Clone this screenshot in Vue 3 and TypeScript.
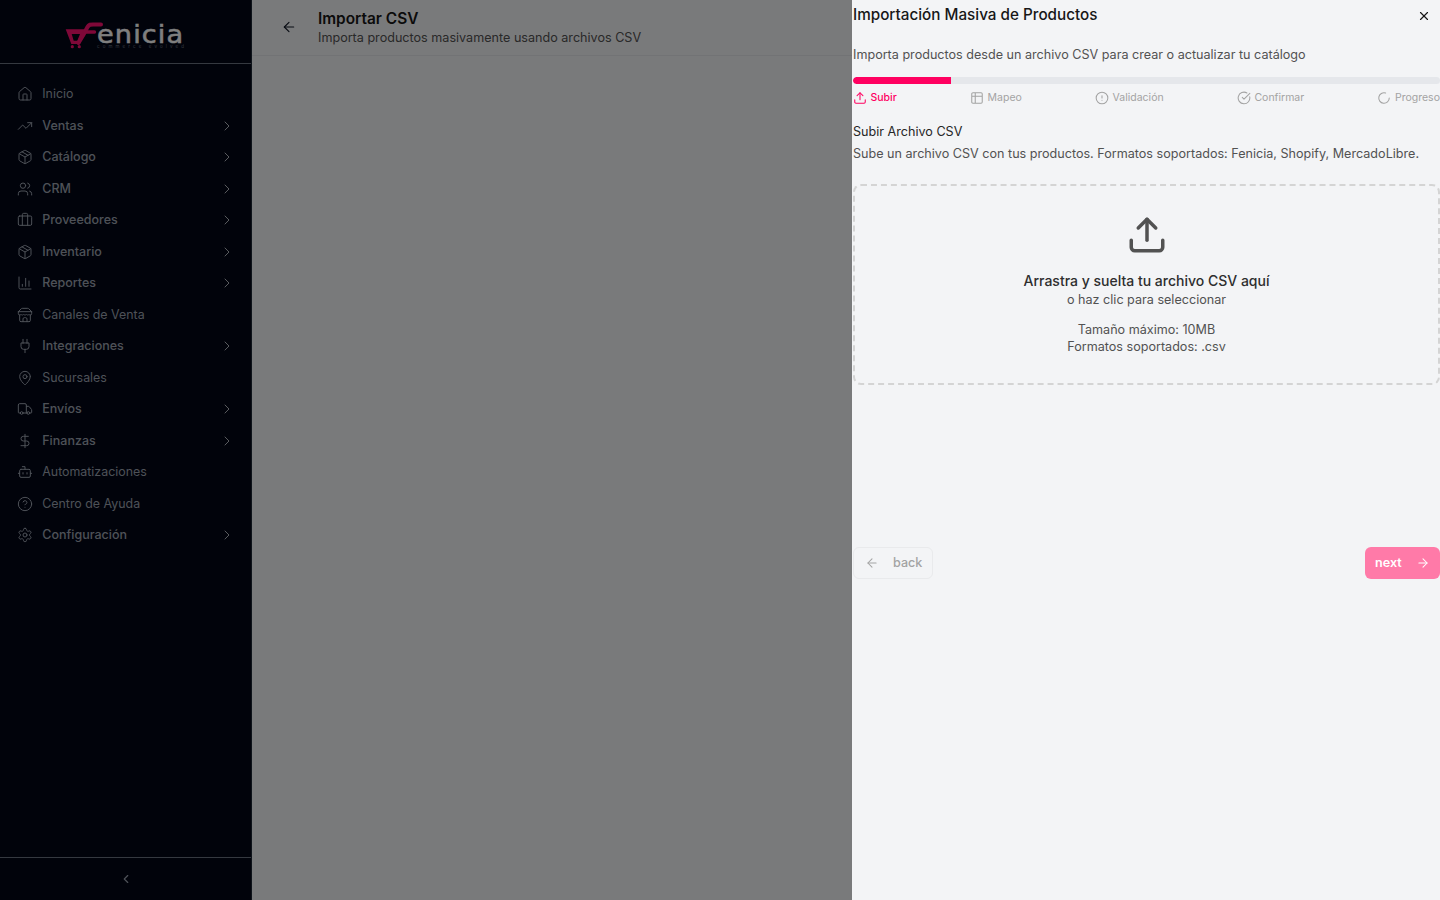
<script setup lang="ts">
interface NavItem { label: string; icon: string; more?: boolean }

const icons: Record<string, string> = {
  home: '<path d="M15 21v-8a1 1 0 0 0-1-1h-4a1 1 0 0 0-1 1v8"/><path d="M3 10a2 2 0 0 1 .709-1.528l7-5.999a2 2 0 0 1 2.582 0l7 5.999A2 2 0 0 1 21 10v9a2 2 0 0 1-2 2H5a2 2 0 0 1-2-2z"/>',
  trend: '<polyline points="22 7 13.5 15.5 8.5 10.5 2 17"/><polyline points="16 7 22 7 22 13"/>',
  box: '<path d="M11 21.73a2 2 0 0 0 2 0l7-4A2 2 0 0 0 21 16V8a2 2 0 0 0-1-1.73l-7-4a2 2 0 0 0-2 0l-7 4A2 2 0 0 0 3 8v8a2 2 0 0 0 1 1.73z"/><path d="M12 22V12"/><polyline points="3.29 7 12 12 20.71 7"/><path d="m7.5 4.27 9 5.15"/>',
  users: '<path d="M16 21v-2a4 4 0 0 0-4-4H6a4 4 0 0 0-4 4v2"/><circle cx="9" cy="7" r="4"/><path d="M22 21v-2a4 4 0 0 0-3-3.87"/><path d="M16 3.13a4 4 0 0 1 0 7.75"/>',
  brief: '<path d="M16 20V4a2 2 0 0 0-2-2h-4a2 2 0 0 0-2 2v16"/><rect width="20" height="14" x="2" y="6" rx="2"/>',
  chart: '<path d="M3 3v16a2 2 0 0 0 2 2h16"/><path d="M18 17V9"/><path d="M13 17V5"/><path d="M8 17v-3"/>',
  store: '<path d="m2 7 4.41-4.41A2 2 0 0 1 7.83 2h8.34a2 2 0 0 1 1.42.59L22 7"/><path d="M4 12v8a2 2 0 0 0 2 2h12a2 2 0 0 0 2-2v-8"/><path d="M15 22v-4a2 2 0 0 0-2-2h-2a2 2 0 0 0-2 2v4"/><path d="M2 7h20"/><path d="M22 7v3a2 2 0 0 1-2 2a2.7 2.7 0 0 1-1.59-.63.7.7 0 0 0-.82 0A2.7 2.7 0 0 1 16 12a2.7 2.7 0 0 1-1.59-.63.7.7 0 0 0-.82 0A2.7 2.7 0 0 1 12 12a2.7 2.7 0 0 1-1.59-.63.7.7 0 0 0-.82 0A2.7 2.7 0 0 1 8 12a2.7 2.7 0 0 1-1.59-.63.7.7 0 0 0-.82 0A2.7 2.7 0 0 1 4 12a2 2 0 0 1-2-2V7"/>',
  plug: '<path d="M12 22v-5"/><path d="M9 8V2"/><path d="M15 8V2"/><path d="M18 8v5a4 4 0 0 1-4 4h-4a4 4 0 0 1-4-4V8Z"/>',
  pin: '<path d="M20 10c0 4.993-5.539 10.193-7.399 11.799a1 1 0 0 1-1.202 0C9.539 20.193 4 14.993 4 10a8 8 0 0 1 16 0"/><circle cx="12" cy="10" r="3"/>',
  truck: '<path d="M14 18V6a2 2 0 0 0-2-2H4a2 2 0 0 0-2 2v11a1 1 0 0 0 1 1h2"/><path d="M15 18H9"/><path d="M19 18h2a1 1 0 0 0 1-1v-3.65a1 1 0 0 0-.22-.624l-3.48-4.35A1 1 0 0 0 17.52 8H14"/><circle cx="17" cy="18" r="2"/><circle cx="7" cy="18" r="2"/>',
  dollar: '<line x1="12" x2="12" y1="2" y2="22"/><path d="M17 5H9.5a3.5 3.5 0 0 0 0 7h5a3.5 3.5 0 0 1 0 7H6"/>',
  bot: '<path d="M12 8V4H8"/><rect width="16" height="12" x="4" y="8" rx="2"/><path d="M2 14h2"/><path d="M20 14h2"/><path d="M15 13v2"/><path d="M9 13v2"/>',
  help: '<circle cx="12" cy="12" r="10"/><path d="M9.09 9a3 3 0 0 1 5.83 1c0 2-3 3-3 3"/><path d="M12 17h.01"/>',
  gear: '<path d="M12.22 2h-.44a2 2 0 0 0-2 2v.18a2 2 0 0 1-1 1.73l-.43.25a2 2 0 0 1-2 0l-.15-.08a2 2 0 0 0-2.73.73l-.22.38a2 2 0 0 0 .73 2.73l.15.1a2 2 0 0 1 1 1.72v.51a2 2 0 0 1-1 1.74l-.15.09a2 2 0 0 0-.73 2.73l.22.38a2 2 0 0 0 2.73.73l.15-.08a2 2 0 0 1 2 0l.43.25a2 2 0 0 1 1 1.73V20a2 2 0 0 0 2 2h.44a2 2 0 0 0 2-2v-.18a2 2 0 0 1 1-1.73l.43-.25a2 2 0 0 1 2 0l.15.08a2 2 0 0 0 2.73-.73l.22-.39a2 2 0 0 0-.73-2.73l-.15-.08a2 2 0 0 1-1-1.74v-.5a2 2 0 0 1 1-1.74l.15-.09a2 2 0 0 0 .73-2.73l-.22-.38a2 2 0 0 0-2.73-.73l-.15.08a2 2 0 0 1-2 0l-.43-.25a2 2 0 0 1-1-1.73V4a2 2 0 0 0-2-2z"/><circle cx="12" cy="12" r="3"/>',
  upload: '<path d="M21 15v4a2 2 0 0 1-2 2H5a2 2 0 0 1-2-2v-4"/><polyline points="17 8 12 3 7 8"/><line x1="12" x2="12" y1="3" y2="15"/>',
  table: '<path d="M9 3H5a2 2 0 0 0-2 2v4m6-6h10a2 2 0 0 1 2 2v4M9 3v18m0 0h10a2 2 0 0 0 2-2V9M9 21H5a2 2 0 0 1-2-2V9m0 0h18"/>',
  alert: '<circle cx="12" cy="12" r="10"/><line x1="12" x2="12" y1="8" y2="12"/><line x1="12" x2="12.01" y1="16" y2="16"/>',
  check: '<path d="M21.801 10A10 10 0 1 1 17 3.335"/><path d="m9 11 3 3L22 4"/>',
  loader: '<path d="M21 12a9 9 0 1 1-6.219-8.56"/>',
  chevR: '<path d="m9 18 6-6-6-6"/>',
  chevL: '<path d="m15 18-6-6 6-6"/>',
  arrowL: '<path d="m12 19-7-7 7-7"/><path d="M19 12H5"/>',
  arrowR: '<path d="M5 12h14"/><path d="m12 5 7 7-7 7"/>',
  x: '<path d="M18 6 6 18"/><path d="m6 6 12 12"/>',
}

const nav: NavItem[] = [
  { label: 'Inicio', icon: 'home' },
  { label: 'Ventas', icon: 'trend', more: true },
  { label: 'Catálogo', icon: 'box', more: true },
  { label: 'CRM', icon: 'users', more: true },
  { label: 'Proveedores', icon: 'brief', more: true },
  { label: 'Inventario', icon: 'box', more: true },
  { label: 'Reportes', icon: 'chart', more: true },
  { label: 'Canales de Venta', icon: 'store' },
  { label: 'Integraciones', icon: 'plug', more: true },
  { label: 'Sucursales', icon: 'pin' },
  { label: 'Envíos', icon: 'truck', more: true },
  { label: 'Finanzas', icon: 'dollar', more: true },
  { label: 'Automatizaciones', icon: 'bot' },
  { label: 'Centro de Ayuda', icon: 'help' },
  { label: 'Configuración', icon: 'gear', more: true },
]

const steps = [
  { label: 'Subir', icon: 'upload', active: true },
  { label: 'Mapeo', icon: 'table', active: false },
  { label: 'Validación', icon: 'alert', active: false },
  { label: 'Confirmar', icon: 'check', active: false },
  { label: 'Progreso', icon: 'loader', active: false },
]
</script>

<template>
  <div class="page">
    <aside class="sidebar">
      <div class="brand">
        <div class="logo">
          <svg class="mark" viewBox="0 0 40 28" width="40" height="28">
            <path d="M0.7 8.3H20L15 23H6.3Z M6.7 13 8.7 19.7H12.3L15 13Z" fill="#ff1070" fill-rule="evenodd" />
            <path d="M13.5 22C17 16.5 20 11 22.5 6C24 3 26 3.5 30 3.5H36" fill="none" stroke="#ff1070" stroke-width="4" stroke-linecap="round" />
            <path d="M20 11H29.5" fill="none" stroke="#ff1070" stroke-width="3.4" stroke-linecap="round" />
            <circle cx="7.3" cy="25.7" r="1.6" fill="#ff1070" />
            <circle cx="14.3" cy="25.7" r="1.6" fill="#ff1070" />
          </svg>
          <div class="wordmark">
            <span class="word">enicia</span>
            <span class="tag">commerce evolved</span>
          </div>
        </div>
      </div>
      <nav class="nav">
        <a v-for="item in nav" :key="item.label" class="nav-item" :class="{ plain: !item.more }">
          <svg class="ico nav-ico" viewBox="0 0 24 24" v-html="icons[item.icon]" />
          <span class="nav-label">{{ item.label }}</span>
          <svg v-if="item.more" class="ico chev" viewBox="0 0 24 24" v-html="icons.chevR" />
        </a>
      </nav>
      <div class="collapse">
        <svg class="ico small" viewBox="0 0 24 24" v-html="icons.chevL" />
      </div>
    </aside>

    <main class="main">
      <header class="main-head">
        <svg class="ico back-ico" viewBox="0 0 24 24" v-html="icons.arrowL" />
        <div>
          <h1 class="main-title">Importar CSV</h1>
          <p class="main-sub">Importa productos masivamente usando archivos CSV</p>
        </div>
      </header>
    </main>

    <div class="overlay"></div>

    <section class="sheet">
      <div class="sheet-head">
        <h2 class="sheet-title">Importación Masiva de Productos</h2>
        <svg class="ico close" viewBox="0 0 24 24" v-html="icons.x" />
      </div>
      <p class="sheet-desc">Importa productos desde un archivo CSV para crear o actualizar tu catálogo</p>

      <div class="bar"><div class="bar-fill" :style="{ width: '16.67%' }"></div></div>
      <div class="steps">
        <div v-for="s in steps" :key="s.label" class="step" :class="{ on: s.active }">
          <svg class="ico step-ico" viewBox="0 0 24 24" v-html="icons[s.icon]" />
          <span>{{ s.label }}</span>
        </div>
      </div>

      <h3 class="block-title">Subir Archivo CSV</h3>
      <p class="block-desc">Sube un archivo CSV con tus productos. Formatos soportados: Fenicia, Shopify, MercadoLibre.</p>

      <div class="drop">
        <svg class="ico drop-ico" viewBox="0 0 24 24" v-html="icons.upload" />
        <p class="drop-main">Arrastra y suelta tu archivo CSV aquí</p>
        <p class="drop-sub">o haz clic para seleccionar</p>
        <p class="drop-note">Tamaño máximo: 10MB<br />Formatos soportados: .csv</p>
      </div>

      <div class="actions">
        <button class="btn back" type="button">
          <svg class="ico btn-ico" viewBox="0 0 24 24" v-html="icons.arrowL" />
          <span>back</span>
        </button>
        <button class="btn next" type="button">
          <span>next</span>
          <svg class="ico btn-ico" viewBox="0 0 24 24" v-html="icons.arrowR" />
        </button>
      </div>
    </section>
  </div>
</template>

<style>
html, body { margin: 0; background: #f3f4f6; }
</style>

<style scoped>
* { box-sizing: border-box; }
p, h1, h2, h3 { margin: 0; }

.page {
  display: flex;
  height: 900px;
  overflow: hidden;
  font-family: Inter, "Liberation Sans", sans-serif;
  background: #f3f4f6;
}

.ico {
  width: 16px;
  height: 16px;
  flex: none;
  fill: none;
  stroke: currentColor;
  stroke-width: 1.5;
  stroke-linecap: round;
  stroke-linejoin: round;
}

.sidebar {
  width: 252px;
  flex: none;
  display: flex;
  flex-direction: column;
  background: #020617;
  border-right: 1px solid #1f2937;
}
.brand {
  height: 64px;
  flex: none;
  border-bottom: 1px solid #6b7280;
  display: flex;
  padding: 21px 0 0 65px;
}
.logo { display: flex; align-items: flex-start; height: 28px; }
.mark { margin-right: -8px; flex: none; display: block; }
.wordmark { display: flex; flex-direction: column; width: 87px; padding-top: 4.7px; }
.word {
  font-family: "DejaVu Sans", sans-serif;
  font-size: 24px;
  line-height: 18px;
  height: 18px;
  letter-spacing: 1px;
  color: #fff;
  -webkit-text-stroke: .5px #fff;
  transform: scaleX(1.13);
  transform-origin: left center;
}
.tag {
  font-size: 4.5px;
  line-height: 5px;
  letter-spacing: 3.1px;
  color: #6b7280;
  white-space: nowrap;
}

.nav {
  flex: 1;
  padding-top: 15px;
  display: flex;
  flex-direction: column;
}
.nav-item {
  display: flex;
  align-items: center;
  gap: 9.25px;
  padding: 6.3px 16.5px 6.3px 17.5px;
  font-size: 12.5px;
  line-height: 18.9px;
  font-weight: 500;
  color: #9ca3af;
}
.nav-item.plain { font-size: 12.4px; font-weight: 400; }
.nav-ico { margin: -1px 0 0 -.5px; }
.nav-label { flex: 1; }
.chev { color: #b4b8bf; margin-top: -1px; }
.collapse {
  height: 43px;
  flex: none;
  border-top: 1px solid #6b7280;
  display: flex;
  align-items: center;
  justify-content: center;
  color: #9ca3af;
}
.small { width: 14px; height: 14px; stroke-width: 2; }

.main { flex: 1; min-width: 0; }
.main-head {
  height: 56px;
  display: flex;
  align-items: center;
  gap: 21px;
  padding: 1px 0 0 29px;
  border-bottom: 1px solid #e5e7eb;
  color: #111827;
}
.back-ico { width: 16px; height: 16px; stroke-width: 1.7; margin-top: -2px; }
.main-title {
  font-size: 15.4px;
  line-height: 20px;
  font-weight: 600;
  color: #171717;
}
.main-sub {
  font-size: 12.6px;
  line-height: 18px;
  color: #525252;
}

.overlay {
  position: fixed;
  inset: 0;
  background: rgba(0, 0, 0, .5);
}

.sheet {
  position: fixed;
  top: 0;
  right: 0;
  bottom: 0;
  width: 588px;
  padding-left: 1px;
  background: #f3f4f6;
  color: #171717;
}
.sheet-head {
  display: flex;
  justify-content: space-between;
  align-items: flex-start;
  height: 37px;
  padding: 4px 9px 0 0;
}
.sheet-title {
  font-size: 15.25px;
  line-height: 21px;
  font-weight: 500;
  color: #171717;
}
.close { width: 14px; height: 14px; margin-top: 5px; stroke-width: 2; color: #171717; }
.sheet-desc {
  margin-top: 8px;
  font-size: 12.6px;
  line-height: 20px;
  color: #525252;
}

.bar {
  margin-top: 12px;
  height: 7px;
  border-radius: 4px;
  background: #e5e7eb;
  overflow: hidden;
}
.bar-fill { height: 100%; background: #ff0060; border-radius: 4px 0 0 4px; }

.steps {
  display: flex;
  justify-content: space-between;
  margin-top: 6px;
  height: 16px;
}
.step {
  display: flex;
  align-items: center;
  gap: 3.5px;
  font-size: 10.5px;
  line-height: 16px;
  color: #a3a3a3;
}
.step.on { color: #ff0060; font-weight: 500; }
.step-ico { width: 14px; height: 14px; stroke-width: 1.8; }

.block-title {
  margin-top: 16px;
  font-size: 12.6px;
  line-height: 20px;
  font-weight: 400;
  color: #262626;
}
.block-desc {
  margin-top: 2px;
  font-size: 12.6px;
  line-height: 20px;
  color: #525252;
}

.drop {
  margin-top: 20px;
  height: 201px;
  border: 2px dashed #d4d4d4;
  border-radius: 8px;
  display: flex;
  flex-direction: column;
  align-items: center;
  padding-top: 28px;
  text-align: center;
}
.drop-ico { width: 42px; height: 42px; color: #525252; stroke-width: 2; }
.drop-main {
  margin-top: 15px;
  font-size: 14px;
  line-height: 20px;
  font-weight: 500;
  color: #2e2e2e;
}
.drop-sub {
  margin-top: 0;
  font-size: 12.6px;
  line-height: 17px;
  color: #525252;
}
.drop-note {
  margin-top: 13px;
  font-size: 12.6px;
  line-height: 17px;
  color: #525252;
}

.actions {
  margin-top: 162px;
  display: flex;
  justify-content: space-between;
}
.btn {
  height: 32px;
  display: flex;
  align-items: center;
  border-radius: 6px;
  font-family: inherit;
  font-size: 12.6px;
  font-weight: 500;
  padding: 0 0 1px;
}
.btn-ico { width: 14px; height: 14px; stroke-width: 1.8; }
.back {
  width: 80px;
  gap: 14px;
  padding-left: 11px;
  background: #f3f4f6;
  border: 1px solid #e9eaec;
  color: #a3a3a3;
}
.next {
  width: 75px;
  gap: 14px;
  padding-left: 10px;
  background: #ff7aa8;
  border: 0;
  color: #fff;
  font-weight: 600;
}
</style>
